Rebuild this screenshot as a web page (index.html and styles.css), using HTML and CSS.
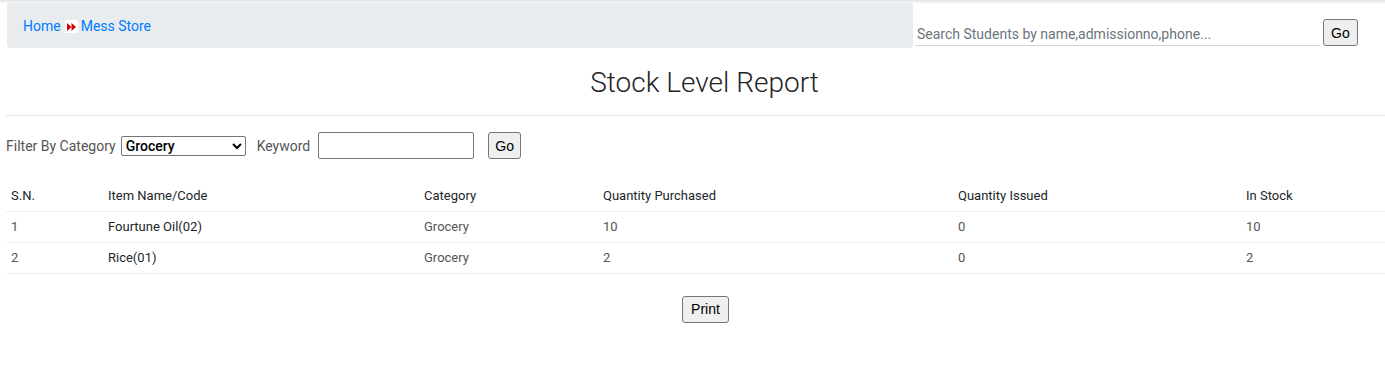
FILE: index.html
```html
<!DOCTYPE html>
<html lang="en">
<head>
  <meta charset="UTF-8" />
  <meta name="viewport" content="width=device-width, initial-scale=1.0" />
  <title>Stock Level Report</title>
  <link rel="stylesheet" href="styles.css">
</head>
<body>
  <div class="top-shadow"></div>

  <header class="topbar">
    <nav class="breadcrumb">
      <a href="#">Home</a>
      <span class="crumb-sep">
        <svg width="11" height="10" viewBox="0 0 11 10">
          <path d="M1 1 L5.5 5 L1 9 Z" fill="#d40000"/>
          <path d="M5.5 1 L10 5 L5.5 9 Z" fill="#d40000"/>
        </svg>
      </span>
      <a href="#">Mess Store</a>
    </nav>
    <form class="search-form">
      <input type="text" class="search-input" placeholder="Search Students by name,admissionno,phone..." />
      <button type="submit" class="btn">Go</button>
    </form>
  </header>

  <main class="content">
    <h1 class="page-title">Stock Level Report</h1>
    <hr class="divider" />

    <form class="filter-form">
      <label for="category">Filter By Category</label>
      <select id="category" class="filter-select">
        <option>Grocery</option>
      </select>
      <label for="keyword" class="keyword-label">Keyword</label>
      <input type="text" id="keyword" class="keyword-input" />
      <button type="submit" class="btn filter-go">Go</button>
    </form>

    <table class="stock-table">
      <colgroup>
        <col class="c-sn" />
        <col class="c-name" />
        <col class="c-cat" />
        <col class="c-pur" />
        <col class="c-iss" />
        <col class="c-stock" />
      </colgroup>
      <thead>
        <tr>
          <th>S.N.</th>
          <th>Item Name/Code</th>
          <th>Category</th>
          <th>Quantity Purchased</th>
          <th>Quantity Issued</th>
          <th>In Stock</th>
        </tr>
      </thead>
      <tbody>
        <tr>
          <td>1</td>
          <td class="item-name">Fourtune Oil(02)</td>
          <td>Grocery</td>
          <td>10</td>
          <td>0</td>
          <td>10</td>
        </tr>
        <tr>
          <td>2</td>
          <td class="item-name">Rice(01)</td>
          <td>Grocery</td>
          <td>2</td>
          <td>0</td>
          <td>2</td>
        </tr>
      </tbody>
    </table>

    <div class="print-row">
      <button type="button" class="btn print-btn">Print</button>
    </div>
  </main>
</body>
</html>
```

FILE: styles.css
```css
/* Global Styles */
* {
  box-sizing: border-box;
}
body {
  margin: 0;
  font-family: Roboto, "Liberation Sans", sans-serif;
  font-size: 14px;
  color: #212529;
  background-color: #fff;
}
.top-shadow {
  height: 4px;
  background: linear-gradient(#e2e2e2, #fff);
  margin-bottom: -1px;
}

/* Top bar */
.topbar {
  display: flex;
  align-items: flex-start;
  padding-left: 7px;
}
.breadcrumb {
  width: 906px;
  height: 45px;
  padding: 2px 16px 0;
  background-color: #e9ecef;
  border-radius: 4px;
  line-height: 19px;
  display: flex;
  align-items: center;
}
.breadcrumb a {
  color: #007bff;
  text-decoration: none;
  font-size: 14px;
}
.crumb-sep {
  display: inline-flex;
  width: 13px;
  height: 13px;
  margin: 0 3px 0 4px;
  background: #fff;
  align-items: center;
  justify-content: center;
}
.search-form {
  display: flex;
  align-items: flex-end;
  margin-left: 3px;
  padding-top: 16px;
}
.search-input {
  width: 404px;
  height: 27px;
  border: none;
  border-bottom: 1px solid #ced4da;
  font-family: Roboto, sans-serif;
  font-size: 14px;
  padding: 4px 1px 0;
  outline: none;
}
.search-input::placeholder {
  color: #6c757d;
}
.btn {
  font-family: "Liberation Sans", Arial, sans-serif;
  font-size: 14px;
  color: #000;
  background-color: #efefef;
  border: 1px solid #767676;
  border-radius: 3px;
  height: 27px;
  padding: 0 7px;
  cursor: pointer;
}
.search-form .btn {
  margin-left: 3px;
}

/* Content */
.content {
  padding-left: 6px;
}
.page-title {
  margin: 18px 0 0;
  text-align: center;
  font-size: 28px;
  font-weight: 300;
  line-height: 34px;
  padding-left: 18px;
}
.divider {
  border: none;
  border-top: 1px solid #e5e5e5;
  margin: 15px 0 0;
}
.filter-form {
  display: flex;
  align-items: center;
  margin-top: 16px;
  color: #555;
}
.filter-select {
  width: 125px;
  height: 20px;
  margin-left: 5px;
  font-family: Roboto, Arial, sans-serif;
  font-size: 14px;
  font-weight: 500;
  color: #000;
  border: 1px solid #767676;
  border-radius: 2px;
  background: #fff;
}
.keyword-label {
  margin-left: 11px;
}
.keyword-input {
  width: 156px;
  height: 27px;
  margin-left: 8px;
  border: 1px solid #767676;
  border-radius: 2px;
}
.filter-go {
  margin-left: 14px;
  padding: 0 6px;
}

/* Table */
.stock-table {
  width: 100%;
  border-collapse: collapse;
  margin-top: 21px;
  font-size: 13px;
  table-layout: fixed;
}
.c-sn { width: 97px; }
.c-name { width: 316px; }
.c-cat { width: 179px; }
.c-pur { width: 355px; }
.c-iss { width: 288px; }
.stock-table th,
.stock-table td {
  text-align: left;
  padding: 0 5px;
  height: 31px;
  border-bottom: 1px solid #eceeef;
}
.stock-table th {
  font-weight: 400;
  color: #212529;
}
.stock-table td {
  color: #555;
}
.stock-table td.item-name {
  color: #212529;
}
.print-row {
  text-align: center;
  margin-top: 22px;
  padding-left: 20px;
}
.print-btn {
  padding: 0 8px;
}
```
